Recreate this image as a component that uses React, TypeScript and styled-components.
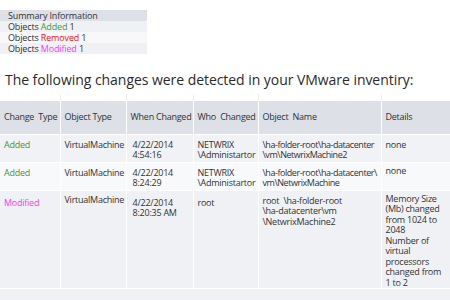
import React from "react";
import styled, { createGlobalStyle } from "styled-components";

const Global = createGlobalStyle`
  html, body { margin: 0; padding: 0; background: #fff; }
  body { font-family: "Open Sans", "Noto Sans", sans-serif; color: #333; overflow: hidden; }
`;

const Page = styled.div`
  display: flex;
  flex-direction: column;
  padding-top: 10px;
  width: 450px;
`;

const Summary = styled.div`
  display: flex;
  flex-direction: column;
  width: 147px;
`;

const SumRow = styled.div<{ $bg: string }>`
  height: 11px;
  line-height: 11px;
  font-size: 9px;
  letter-spacing: -0.15px;
  padding-left: 8px;
  background: ${(p) => p.$bg};
  color: #333;
  white-space: nowrap;
`;

const Tag = styled.span<{ $c: string }>`
  color: ${(p) => p.$c};
`;

const Title = styled.h2`
  margin: 17px 0 0 5px;
  font-size: 14px;
  line-height: 18px;
  font-weight: 400;
  letter-spacing: -0.05px;
  color: #2b2b2b;
  white-space: nowrap;
`;

const Table = styled.table`
  margin-top: 5px;
  border-collapse: collapse;
  table-layout: fixed;
  width: 460px;
  font-size: 9px;
  line-height: 10.5px;
  letter-spacing: -0.25px;
`;

const Spacer = styled.tr`
  height: 7px;
  td {
    border-right: 1px solid #f0f0f0;
    padding: 0;
  }
`;

const Row = styled.tr<{ $bg: string; $h: number }>`
  background: ${(p) => p.$bg};
  height: ${(p) => p.$h}px;
  border-bottom: 1px solid #fff;
`;

const Th = styled.th`
  font-weight: 400;
  text-align: left;
  padding: 0 4px;
  border-right: 1px solid #fff;
  color: #333;
  white-space: nowrap;
  overflow: hidden;
  vertical-align: middle;
`;

const Td = styled.td<{ $pt?: number; $c?: string; $tight?: boolean }>`
  padding: ${(p) => p.$pt ?? 3}px 0 0 4px;
  vertical-align: top;
  border-right: 1px solid #fff;
  white-space: nowrap;
  overflow: hidden;
  letter-spacing: ${(p) => (p.$tight ? "-0.45px" : "inherit")};
  color: ${(p) => p.$c ?? "#333"};
`;

const Filler = styled.tr`
  background: #f0f1f5;
  height: 20px;
  td { padding: 0; }
`;

export default function App() {
  return (
    <Page>
      <Global />
      <Summary>
        <SumRow $bg="#dde0e6">Summary Information</SumRow>
        <SumRow $bg="#f0f1f4">
          Objects <Tag $c="#3a9a3a">Added</Tag> 1
        </SumRow>
        <SumRow $bg="#f8f8fa">
          Objects <Tag $c="#ee1111">Removed</Tag> 1
        </SumRow>
        <SumRow $bg="#f0f1f4">
          Objects <Tag $c="#ff33ff">Modified</Tag> 1
        </SumRow>
      </Summary>
      <Title>The following changes were detected in your VMware inventiry:</Title>
      <Table>
        <colgroup>
          <col style={{ width: 60 }} />
          <col style={{ width: 66 }} />
          <col style={{ width: 67 }} />
          <col style={{ width: 65 }} />
          <col style={{ width: 123 }} />
          <col style={{ width: 79 }} />
        </colgroup>
        <tbody>
          <Spacer>
            <td /><td /><td /><td /><td /><td />
          </Spacer>
          <Row $bg="#dde0e6" $h={33}>
            <Th>Change&nbsp; Type</Th>
            <Th>Object Type</Th>
            <Th>When Changed</Th>
            <Th>Who&nbsp; Changed</Th>
            <Th>Object&nbsp; Name</Th>
            <Th>Details</Th>
          </Row>
          <Row $bg="#f1f2f5" $h={28}>
            <Td $c="#3a9a3a" $pt={5}>Added</Td>
            <Td $pt={5}>VirtualMachine</Td>
            <Td $pt={5}>&nbsp;4/22/2014<br />&nbsp;4:54:16</Td>
            <Td $pt={5}>NETWRIX<br />\Administartor</Td>
            <Td $pt={5} $tight>\ha-folder-root\ha-datacenter<br />\vm\NetwrixMachine2</Td>
            <Td $pt={5}>none</Td>
          </Row>
          <Row $bg="#f8f9fb" $h={28}>
            <Td $c="#3a9a3a" $pt={5}>Added</Td>
            <Td $pt={5}>VirtualMachine</Td>
            <Td $pt={5}>&nbsp;4/22/2014<br />&nbsp;8:24:29</Td>
            <Td $pt={5}>NETWRIX<br />\Administartor</Td>
            <Td $pt={5} $tight>\ha-folder-root\ha-datacenter\<br />vm\NetwrixMachine</Td>
            <Td $pt={3}>none</Td>
          </Row>
          <Row $bg="#f0f1f5" $h={88}>
            <Td $c="#ff33ff" $pt={7}>Modified</Td>
            <Td $pt={4}>VirtualMachine</Td>
            <Td $pt={7}>&nbsp;4/22/2014<br />&nbsp;8:20:35 AM</Td>
            <Td $pt={7}>root</Td>
            <Td $pt={5}>root&nbsp; \ha-folder-root<br />\ha-datacenter\vm<br />\NetwrixMachine2</Td>
            <Td $pt={3}>
              Memory Size<br />(Mb) changed<br />from 1024 to<br />2048<br />Number of<br />virtual<br />processors<br />changed from<br />1 to 2
            </Td>
          </Row>
          <Filler>
            <td colSpan={6} />
          </Filler>
        </tbody>
      </Table>
    </Page>
  );
}
